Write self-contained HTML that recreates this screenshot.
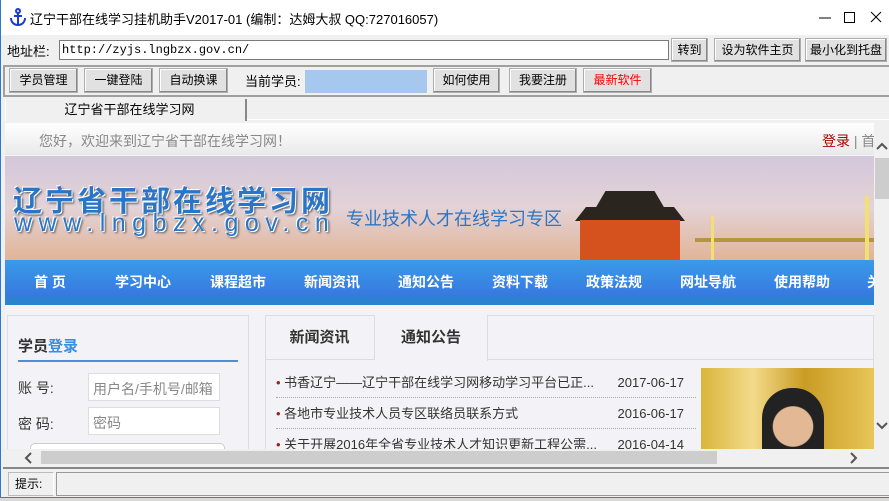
<!DOCTYPE html>
<html><head><meta charset="utf-8"><style>
*{margin:0;padding:0;box-sizing:border-box}
body{width:889px;height:501px;overflow:hidden;background:#f0f0f0;font-family:"Liberation Sans","Noto Sans CJK SC",sans-serif;font-size:12px;position:relative;color:#000}
.a{position:absolute;white-space:nowrap}
.btn{position:absolute;background:#e1e1e1;border:1px solid #adadad;box-shadow:inset -1px -1px #888,inset 1px 1px #fff;text-align:center;font-size:12px;line-height:22px}
.nav span{position:absolute;top:12px;color:#fff;font-weight:bold;font-size:14px}
</style></head><body>
<div class="a" style="left:0;top:0;width:889px;height:35px;background:#fff;border-left:1px solid #2b79d0"></div>
<svg class="a" style="left:9px;top:8px" width="18" height="18" viewBox="0 0 18 18"><g fill="none" stroke="#1b3ccf" stroke-width="2"><circle cx="9" cy="3" r="2"/><path d="M9 5v12M5 8h8M2 10c0 4 3 7 7 7s7-3 7-7"/></g></svg>
<div class="a" style="left:30px;top:9px;font-size:13px">辽宁干部在线学习挂机助手V2017-01 (编制：达姆大叔 QQ:727016057)</div>
<div class="a" style="left:815px;top:6px;font-size:13px;width:70px">
<svg width="70" height="20"><path d="M4 12h12" stroke="#000"/><rect x="29.5" y="6.5" width="10" height="10" fill="none" stroke="#000"/><path d="M56 6l10 10M66 6l-10 10" stroke="#000"/></svg></div>
<div class="a" style="left:0;top:35px;width:1px;height:466px;background:#2b79d0"></div>
<div class="a" style="left:7px;top:41px;font-size:13px">地址栏:</div>
<div class="a" style="left:59px;top:40px;width:610px;height:20px;background:#fff;border:1px solid #7a7a7a;font-family:'Liberation Mono',monospace;font-size:12px;padding:2px 2px;line-height:14px">http://zyjs.lngbzx.gov.cn/</div>
<div class="btn" style="left:671px;top:38px;width:37px;height:24px">转到</div>
<div class="btn" style="left:714px;top:38px;width:87px;height:24px">设为软件主页</div>
<div class="btn" style="left:805px;top:38px;width:82px;height:24px">最小化到托盘</div>
<div class="a" style="left:3px;top:65px;width:886px;height:32px;border-top:2px solid #a0a0a0;border-left:2px solid #a0a0a0;border-bottom:2px solid #a0a0a0"></div>
<div class="btn" style="left:9px;top:68px;width:69px;height:25px">学员管理</div>
<div class="btn" style="left:84px;top:68px;width:69px;height:25px">一键登陆</div>
<div class="btn" style="left:159px;top:68px;width:69px;height:25px">自动换课</div>
<div class="a" style="left:245px;top:71px;font-size:13px">当前学员:</div>
<div class="a" style="left:305px;top:70px;width:122px;height:23px;background:#a6c8ee"></div>
<div class="btn" style="left:433px;top:68px;width:67px;height:25px">如何使用</div>
<div class="btn" style="left:509px;top:68px;width:68px;height:25px">我要注册</div>
<div class="btn" style="left:583px;top:68px;width:69px;height:25px;color:#f00">最新软件</div>
<div class="a" style="left:5px;top:99px;width:242px;height:22px;border-right:2px solid #888;text-align:center;font-size:13px;line-height:22px;padding-left:8px;background:#f0f0f0;border-left:1px solid #fff">辽宁省干部在线学习网</div>
<div class="a" style="left:247px;top:119px;width:642px;height:1px;background:#fff"></div>
<!-- browser -->
<div class="a" style="left:5px;top:123px;width:869px;height:326px;background:#f3f3f7;overflow:hidden">
 <div class="a" style="left:0;top:0;width:869px;height:32px;background:linear-gradient(#fff,#e9e9e9)"></div>
 <div class="a" style="left:34px;top:8px;font-size:14px;color:#888">您好，欢迎来到辽宁省干部在线学习网！</div>
 <div class="a" style="left:817px;top:8px;font-size:14px;color:#a00">登录 <span style="color:#888">| 首</span></div>
 <div class="a" style="left:0;top:33px;width:869px;height:104px;background:linear-gradient(#d3c7db,#e3d2d6 50%,#e2b497)"></div>
 <div class="a" style="left:590px;top:68px;width:70px;height:18px;background:#2b2520;clip-path:polygon(15% 0,85% 0,100% 100%,0 100%)"></div>
 <div class="a" style="left:570px;top:84px;width:110px;height:14px;background:#2b2520;clip-path:polygon(10% 0,90% 0,100% 100%,0 100%)"></div>
 <div class="a" style="left:575px;top:97px;width:100px;height:40px;background:#d5521e"></div>
 <div class="a" style="left:690px;top:115px;width:179px;height:4px;background:#b59640"></div>
 <div class="a" style="left:706px;top:93px;width:3px;height:44px;background:#f4e070"></div>
 <div class="a" style="left:860px;top:73px;width:4px;height:64px;background:#f4e070"></div>
 <div class="a" style="left:8px;top:55px;font-size:29px;font-weight:bold;color:#2a75c5;letter-spacing:3px;text-shadow:1px 1px 0 #fff,-1px -1px 0 #fff,2px 2px 2px #555">辽宁省干部在线学习网</div>
 <div class="a" style="left:9px;top:86px;font-size:25px;color:#2a75c5;letter-spacing:6.5px;text-shadow:1px 1px 0 #fff,-1px -1px 0 #fff,2px 2px 2px #555">www.lngbzx.gov.cn</div>
 <div class="a" style="left:341px;top:82px;font-size:18px;color:#2a75c5">专业技术人才在线学习专区</div>
 <div class="a nav" style="left:0;top:137px;width:869px;height:45px;background:linear-gradient(#3a9ae8,#3779e0 80%,#2a83cf 85%)">
  <span style="left:29px">首 页</span><span style="left:110px">学习中心</span><span style="left:205px">课程超市</span><span style="left:299px">新闻资讯</span><span style="left:393px">通知公告</span><span style="left:487px">资料下载</span><span style="left:581px">政策法规</span><span style="left:675px">网址导航</span><span style="left:769px">使用帮助</span><span style="left:862px">关</span>
 </div>
 <div class="a" style="left:2px;top:192px;width:242px;height:150px;border:1px solid #ddd;background:#f3f3f7"></div>
 <div class="a" style="left:13px;top:212px;font-size:15px;font-weight:bold;color:#333">学员<span style="color:#3a8ee0">登录</span></div>
 <div class="a" style="left:13px;top:237px;width:220px;height:2px;background:#4a90d9"></div>
 <div class="a" style="left:13px;top:255px;font-size:14px;color:#333">账 号:</div>
 <div class="a" style="left:83px;top:250px;width:132px;height:28px;background:#fff;border:1px solid #ddd;color:#888;font-size:14px;padding:5px 4px">用户名/手机号/邮箱</div>
 <div class="a" style="left:13px;top:291px;font-size:14px;color:#333">密 码:</div>
 <div class="a" style="left:83px;top:284px;width:132px;height:28px;background:#fff;border:1px solid #ddd;color:#888;font-size:14px;padding:5px 4px">密码</div>
 <div class="a" style="left:25px;top:320px;width:195px;height:20px;border:1px solid #ccc;border-radius:5px;background:#fff"></div>
 <div class="a" style="left:260px;top:192px;width:609px;height:150px;border:1px solid #ddd;background:#f3f3f7"></div>
 <div class="a" style="left:260px;top:236px;width:609px;height:1px;background:#ddd"></div>
 <div class="a" style="left:260px;top:192px;width:110px;height:45px;border-right:1px solid #ddd;font-size:15px;font-weight:bold;color:#333;text-align:center;line-height:45px">新闻资讯</div>
 <div class="a" style="left:370px;top:192px;width:113px;height:46px;border-right:1px solid #ddd;background:#f3f3f7;font-size:15px;font-weight:bold;color:#333;text-align:center;line-height:45px">通知公告</div>
 <div class="a" style="left:271px;top:244px;font-size:13px;color:#333;line-height:31px;width:420px">
  <div style="border-bottom:1px dotted #aaa;height:31px"><span style="color:#8b2b1a">•</span> 书香辽宁——辽宁干部在线学习网移动学习平台已正...<span style="float:right;margin-right:12px">2017-06-17</span></div>
  <div style="border-bottom:1px dotted #aaa;height:31px"><span style="color:#8b2b1a">•</span> 各地市专业技术人员专区联络员联系方式<span style="float:right;margin-right:12px">2016-06-17</span></div>
  <div style="height:31px"><span style="color:#8b2b1a">•</span> 关于开展2016年全省专业技术人才知识更新工程公需...<span style="float:right;margin-right:12px">2016-04-14</span></div>
 </div>
 <div class="a" style="left:696px;top:245px;width:173px;height:90px;background:linear-gradient(90deg,#d9b53a,#f3db8a 30%,#c99c24 60%,#e8c65a)"></div>
 <div class="a" style="left:757px;top:265px;width:62px;height:70px;border-radius:30px 30px 0 0;background:radial-gradient(circle at 50% 55%,#e2b895 0 40%,#222 42%)"></div>
</div>
<!-- v scrollbar -->
<div class="a" style="left:874px;top:123px;width:15px;height:343px;background:#f0f0f0"></div>
<svg class="a" style="left:876px;top:142px" width="12" height="8"><path d="M1 7l5-5 5 5" fill="none" stroke="#555" stroke-width="2"/></svg>
<div class="a" style="left:875px;top:158px;width:14px;height:41px;background:#cdcdcd"></div>
<svg class="a" style="left:876px;top:422px" width="12" height="8"><path d="M1 1l5 5 5-5" fill="none" stroke="#555" stroke-width="2"/></svg>
<!-- h scrollbar -->
<div class="a" style="left:5px;top:449px;width:869px;height:17px;background:#f0f0f0"></div>
<div class="a" style="left:41px;top:451px;width:676px;height:13px;background:#cdcdcd"></div>
<svg class="a" style="left:24px;top:452px" width="8" height="12"><path d="M7 1l-5 5 5 5" fill="none" stroke="#555" stroke-width="2"/></svg>
<svg class="a" style="left:850px;top:452px" width="8" height="12"><path d="M1 1l5 5-5 5" fill="none" stroke="#555" stroke-width="2"/></svg>
<!-- status -->
<div class="a" style="left:3px;top:467px;width:886px;height:2px;background:#888"></div>
<div class="a" style="left:8px;top:472px;width:46px;height:24px;border:1px solid #bbb;border-right-color:#fff;font-size:12px;line-height:22px;padding-left:6px">提示:</div>
<div class="a" style="left:56px;top:472px;width:833px;height:24px;border:1px solid #999;border-right:none"></div>
<div class="a" style="left:0;top:497px;width:889px;height:4px;background:#d9d9d9;border-top:1px solid #3a7fc8"></div>
</body></html>
